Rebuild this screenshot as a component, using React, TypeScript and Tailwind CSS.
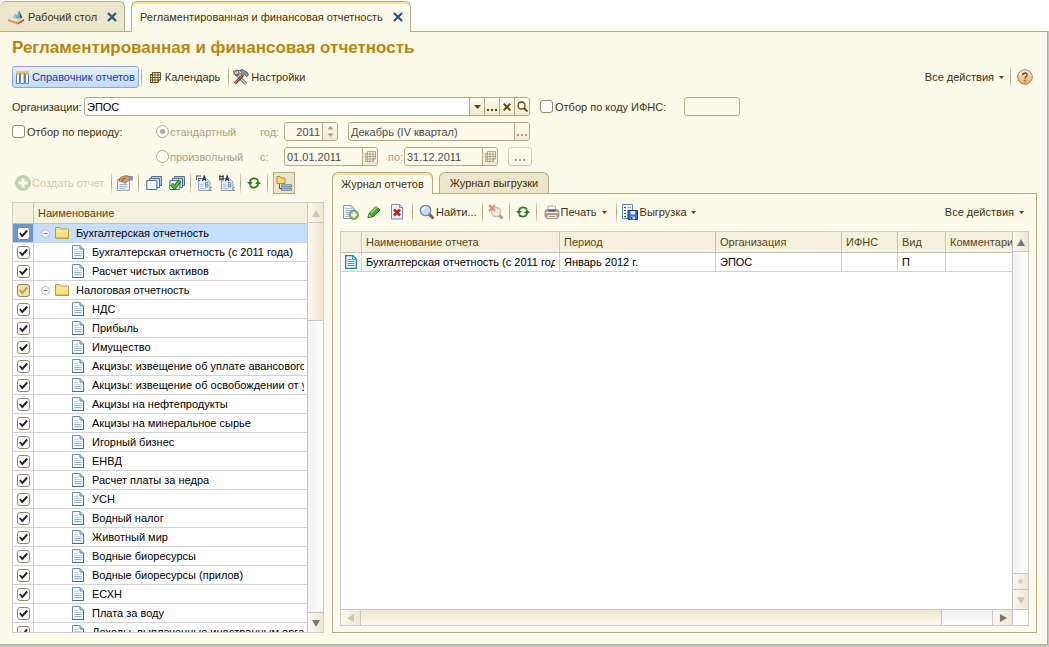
import type { ReactNode } from "react";

const treeRows = [
  { name: "Бухгалтерская отчетность", group: true, selected: true },
  { name: "Бухгалтерская отчетность (с 2011 года)" },
  { name: "Расчет чистых активов" },
  { name: "Налоговая отчетность", group: true, partial: true },
  { name: "НДС" },
  { name: "Прибыль" },
  { name: "Имущество" },
  { name: "Акцизы: извещение об уплате авансового платежа" },
  { name: "Акцизы: извещение об освобождении от уплаты" },
  { name: "Акцизы на нефтепродукты" },
  { name: "Акцизы на минеральное сырье" },
  { name: "Игорный бизнес" },
  { name: "ЕНВД" },
  { name: "Расчет платы за недра" },
  { name: "УСН" },
  { name: "Водный налог" },
  { name: "Животный мир" },
  { name: "Водные биоресурсы" },
  { name: "Водные биоресурсы (прилов)" },
  { name: "ЕСХН" },
  { name: "Плата за воду" },
  { name: "Доходы, выплаченные иностранным организациям" },
];

/* ---------- icons ---------- */

function Svg({ children, className = "" }: { children: ReactNode; className?: string }) {
  return (
    <svg viewBox="0 0 16 16" className={`size-4 shrink-0 ${className}`} fill="none" aria-hidden="true">
      {children}
    </svg>
  );
}

function DesktopIcon() {
  return (
    <Svg>
      <path d="M0 10 5.500 7.500 16 10l-6 3.500z" fill="#f6cfa4" />
      <path d="M0 10l10 3.500v2L0 12z" fill="#d89468" />
      <path d="M10 13.500 16 10v2l-6 3.500z" fill="#a9603c" />
      <path d="M2 10 6 8.300l6 1.700-3 2z" fill="#fff7ea" />
      <path d="M4.500 9.500 7 4.500l2 5.500z" fill="#9cc6df" />
      <path d="M7 4.500 10.500 9 9 10z" fill="#5590b5" />
      <path d="M8.500 8.500 11 1.500l1 8z" fill="#6ea8cc" />
      <path d="M11 1.500 14.500 8.500 12 9.500z" fill="#235c86" />
      <path d="M9.500 9h2.500v2H9.500z" fill="#ecc648" />
    </Svg>
  );
}

function CloseIcon() {
  return (
    <svg viewBox="0 0 10 10" className="size-[10px]" aria-hidden="true">
      <path d="M1 1l8 8M9 1 1 9" stroke="#23587c" strokeWidth="2.2" />
    </svg>
  );
}

function ColumnsIcon() {
  return (
    <svg viewBox="0 0 13 13" className="size-[13px] shrink-0" fill="none" aria-hidden="true">
      <path d="M.5 1.500h3v11h-3zM4.500 1.500h4v11h-4zM9.500 1.500h3v11h-3z" fill="#fff" stroke="#6688b0" />
      <path d="M0 0h4v3H0zM4.500 0h4v3h-4zM9 0h4v3H9z" fill="#f2c84c" />
      <path d="M0 3h13" stroke="#a98a3c" strokeWidth=".7" />
      <path d="M3.500 4v8M8 4v8M12.500 4v8" stroke="#4d79aa" strokeWidth=".8" />
    </svg>
  );
}

function CalendarGrid({ className = "" }: { className?: string }) {
  return (
    <svg viewBox="0 0 11 11" className={`size-[11px] shrink-0 ${className}`} fill="none" aria-hidden="true">
      <path
        d="M2.500.5h8v7.500h-2v2.500h-8v-8h2zM2.500.5v10M5 .5v10M8 .5v10M.5 3h10M.5 5.500h10M.5 8h9"
        stroke="currentColor"
        strokeWidth=".9"
      />
    </svg>
  );
}

function ToolsIcon() {
  return (
    <Svg>
      <path d="M3 5l10 10" stroke="#555c66" strokeWidth="3" />
      <path d="M3 5l10 10" stroke="#d5dbe2" strokeWidth="1.200" />
      <path d="M1 1.500v3L3.500 6.500 6 5 5.500 2 3.500 1M3 1v2.500" stroke="#555c66" strokeWidth="1.300" />
      <path d="M2 14.500 10 6" stroke="#7e3f22" strokeWidth="2.800" />
      <path d="M2 14 9.500 6" stroke="#d18a58" />
      <path d="M6.500 1.500 9 .5l5 2.500 1.500 3-2 1.500-2-2-2 1.500-2-2L9 3z" fill="#8d949c" stroke="#474b52" strokeWidth=".8" />
    </Svg>
  );
}

function HelpIcon() {
  return (
    <svg viewBox="0 0 16 16" className="size-4 shrink-0" aria-hidden="true">
      <defs>
        <linearGradient id="help" x2="0" y2="1">
          <stop stopColor="#fdf1e0" />
          <stop offset="1" stopColor="#f3a650" />
        </linearGradient>
      </defs>
      <circle cx="8" cy="8" r="7.300" fill="url(#help)" stroke="#8f8276" />
      <path d="M5.800 6.200c0-3 4.600-2.800 4.400-.2C10.100 7.500 8 7.600 8 9.500" fill="none" stroke="#6b4528" strokeWidth="1.300" />
      <path d="M7.300 10.700h1.400v1.500H7.300z" fill="#6b4528" />
    </svg>
  );
}

function Caret() {
  return (
    <svg viewBox="0 0 5 3" className="h-[3px] w-[5px] shrink-0" aria-hidden="true">
      <path d="M0 0h5L2.500 3z" fill="#5a4606" />
    </svg>
  );
}

function DropGlyph() {
  return (
    <svg viewBox="0 0 7 4" className="h-1 w-[7px] shrink-0" aria-hidden="true">
      <path d="M0 0h7L3.500 4z" fill="#5a4606" />
    </svg>
  );
}

function SearchGlyph() {
  return (
    <svg viewBox="0 0 11 11" className="size-[11px]" fill="none" aria-hidden="true">
      <circle cx="4.500" cy="4.500" r="3.500" stroke="#5a4606" strokeWidth="1.300" />
      <path d="m7 7 3.500 3.500" stroke="#5a4606" strokeWidth="1.800" />
    </svg>
  );
}

function CrossGlyph() {
  return (
    <svg viewBox="0 0 8 8" className="size-2" aria-hidden="true">
      <path d="m.7.7 6.600 6.600M7.300.7.7 7.300" stroke="#5a4606" strokeWidth="1.900" />
    </svg>
  );
}

function DotsGlyph() {
  return (
    <svg viewBox="0 0 10 2" className="mt-[7px] h-[2px] w-[10px]" aria-hidden="true">
      <path d="M0 0h2v2H0zM4 0h2v2H4zM8 0h2v2H8z" fill="currentColor" />
    </svg>
  );
}

function PlusIcon() {
  return (
    <Svg className="opacity-50">
      <circle cx="8" cy="8" r="7.300" fill="#7cb568" stroke="#7c8f72" />
      <path d="M8 3.500v9M3.500 8h9" stroke="#fff" strokeWidth="3" />
    </Svg>
  );
}

function PropertiesIcon() {
  return (
    <Svg>
      <path d="M.5 4.500h12v11H.5z" fill="#f3f8fd" stroke="#87a4c0" />
      <path d="M2.500 9.500h8M2.500 11.500h8M2.500 13.500h6" stroke="#8fb2d6" />
      <path d="M2 4 5.500 1.500 9.500.700l3.500 1v3.500l-3 .8-2 2.500L6.500 7 2.500 6.500z" fill="#d99a6c" stroke="#8d5030" strokeWidth=".8" />
      <path d="M12.500 1H16v4.500h-3.500z" fill="#7c9ab8" />
      <path d="M4 5h3M5.500 3.500h3" stroke="#8d5030" strokeWidth=".8" />
    </Svg>
  );
}

function StackIcon({ check = false }: { check?: boolean }) {
  return (
    <Svg>
      <path d="M5.500 1.500h10v9h-10z" fill="#b9d2ea" stroke="#4f6f8f" />
      <path d="M3.500 3.500h10v9h-10z" fill="#d6e6f5" stroke="#4f6f8f" />
      <path d="M.8 5.500h10v9H.8z" fill="#f2f8fe" stroke="#4f6f8f" />
      {check && (
        <>
          <path d="m2.500 9 3 3.500 5.500-7" stroke="#1d6e18" strokeWidth="3.800" />
          <path d="m2.500 9 3 3.500 5.500-7" stroke="#55c83c" strokeWidth="2" />
        </>
      )}
    </Svg>
  );
}

function MarksIcon({ filled = false }: { filled?: boolean }) {
  return (
    <Svg>
      <path d="M2.500 3.500h8l3.500 3.500v8.500H2.500z" fill="#dfe9f4" stroke="#8aa2ba" />
      {filled ? (
        <path d="M0 1.500h5M0 4h5M1 0v5.500M4 0v5.500" stroke="#3a3a3a" strokeWidth="1.100" />
      ) : (
        <path d="M0 1h5M.5 1v4M2 3.500h3M2 5.500h2" stroke="#555" />
      )}
      <path d="m6.500 6 1.700-5 1.700 5M7 4.300h2.400" stroke="#153c68" strokeWidth="1.200" />
      <path d="M9.500 7.500v4.500h2.200V7.500zM9.500 9.700h2" stroke="#6d8299" strokeWidth=".9" />
      <path d="M16 12.500h-2v3h2" stroke="#8d959e" />
      <path d="M4 9.500h3M4 11.500h3M4 13.500h5" stroke="#b3c5d8" />
    </Svg>
  );
}

function RefreshIcon() {
  return (
    <Svg>
      <path d="M4 7c.5-4.500 6.500-4.500 8-1.500" stroke="#2f7a22" strokeWidth="1.800" />
      <path d="M1 7h6L4 10.500z" fill="#2f7a22" />
      <path d="M12 9c-.5 4.500-6.500 4.500-8 1.500" stroke="#2f7a22" strokeWidth="1.800" />
      <path d="M9 9h6l-3-3.500z" fill="#2f7a22" />
    </Svg>
  );
}

function HierarchyIcon() {
  return (
    <Svg>
      <path d="M1 1.500h3l1 1.500h4v5.500H1z" fill="#f8da72" stroke="#b88b24" />
      <path d="M3.500 9v4.500H6" stroke="#5a5a50" />
      <path d="M5.500 9.800h10v2h-10zM5.500 13.300h10v2h-10z" fill="#b9d5ee" stroke="#3e6c98" strokeWidth=".8" />
    </Svg>
  );
}

function FolderIcon() {
  return (
    <svg viewBox="0 0 14 12" className="h-3 w-[14px] shrink-0" fill="none" aria-hidden="true">
      <path d="M.5 11.500v-11h4.500l1.200 1.500h7.300v9.500z" fill="#f9e084" stroke="#c39a3c" />
      <path d="M1.500 4h11.500" stroke="#fff3bd" />
      <path d="M1.500 10.500h11.500" stroke="#e8bb50" />
    </svg>
  );
}

function SheetIcon() {
  return (
    <svg viewBox="0 0 12 14" className="h-[14px] w-3 shrink-0" fill="none" aria-hidden="true">
      <path d="M.5.5h7.500l3.500 3.500v9.500H.5z" fill="#f1f8fe" stroke="#6e8ea9" />
      <path d="M8 .5v3.500h3.500" fill="#a9c3d8" stroke="#6e8ea9" />
      <path d="M2.500 4.500h4M2.500 6.500h7" stroke="#c0d3e4" />
      <path d="M2.500 8.500h7M2.500 10.500h7" stroke="#8fb1cf" />
      <path d="M0 13.500h12M11.500 4v10" stroke="#4c6d89" />
    </svg>
  );
}

function ReportIcon() {
  return (
    <svg viewBox="0 0 12 14" className="h-[14px] w-3" fill="none" aria-hidden="true">
      <path d="M.7.7h7.300l3.300 3.300v9.300H.7z" fill="#e9fbff" stroke="#1689b5" strokeWidth="1.300" />
      <path d="M7.500 1v3.500H11M2.500 4.500h4M2.500 6.500h7M2.500 8.500h7M2.500 10.500h7" stroke="#12b0dc" />
    </svg>
  );
}

function AddDocIcon() {
  return (
    <Svg>
      <path d="M.5 1.500h7.500l3.500 3.500v9.500H.5z" fill="#eef5fc" stroke="#7f9ab4" />
      <path d="M8 1.500V5h3.500M2.500 4.500h4M2.500 6.500h6M2.500 8.500h4M2.500 10.500h3M2.500 12.500h3" stroke="#9fb8d0" />
      <circle cx="10.800" cy="10.800" r="4.600" fill="#8fbb7c" stroke="#6d8a62" />
      <path d="M10.800 8v5.600M8 10.800h5.600" stroke="#fff" strokeWidth="2" />
    </Svg>
  );
}

function PencilIcon() {
  return (
    <Svg>
      <path d="M2 13.500 3.500 9 10 2.500l4 3.500-6.500 6.500z" fill="#3fae2a" stroke="#1f6a18" />
      <path d="m5 9 6-6" stroke="#9be276" strokeWidth="1.500" />
      <path d="M2 13.500 3.200 9.800 5.800 12.500z" fill="#e2edc0" stroke="#1f6a18" strokeWidth=".6" />
    </Svg>
  );
}

function DeleteDocIcon() {
  return (
    <Svg>
      <path d="M2.500.5h8l3 3v11.500h-11z" fill="#eaf3fb" stroke="#6d93b8" />
      <path d="M10.500.5v3h3" stroke="#6d93b8" />
      <path d="m5 5.500 6 6M11 5.500l-6 6" stroke="#c61f16" strokeWidth="2.600" />
    </Svg>
  );
}

function MagnifierIcon({ cancel = false }: { cancel?: boolean }) {
  return (
    <Svg className={cancel ? "opacity-60" : ""}>
      <path d="m10 10 4.500 4.500" stroke="#8a5a40" strokeWidth="3" />
      <circle
        cx={cancel ? 8 : 6.5}
        cy={cancel ? 8 : 6.5}
        r={cancel ? 4.5 : 5.2}
        fill={cancel ? "#e4e4e6" : "#c3ddf6"}
        stroke={cancel ? "#a7a3a3" : "#74849c"}
        strokeWidth="1.300"
      />
      {cancel ? (
        <path d="m1 1 6 6M7 1 1 7" stroke="#d0402c" strokeWidth="2.200" />
      ) : (
        <path d="M3.500 6.500c0-2 1.500-3 3-3" stroke="#fff" strokeWidth="1.500" />
      )}
    </Svg>
  );
}

function PrinterIcon() {
  return (
    <Svg>
      <path d="M4 2h7.500v5H4z" fill="#fff" stroke="#a2a5ab" strokeWidth=".8" />
      <path d="M1.500 6.500 3.500 5.500h9l2 1 .5 1.500v4.500H1V8z" fill="#a9abb1" stroke="#7a7d84" strokeWidth=".8" />
      <path d="M4.500 6h7v1.200h-7z" fill="#4b4d52" />
      <path d="M1.500 8.500h13" stroke="#eceded" />
      <path d="M3.500 10.500h9l1 4h-11z" fill="#f8e6d6" stroke="#98857a" strokeWidth=".8" />
      <path d="M4.500 12.500h7" stroke="#dd8a60" />
    </Svg>
  );
}

function ExportIcon() {
  return (
    <Svg>
      <path d="M.5.5h10v14H.5z" fill="#f4f9fe" stroke="#5e88b4" />
      <path d="M2 3.500h2M2 6.500h2M2 9.500h2M2 12.500h2" stroke="#2a4e7c" />
      <path d="M5 3.500h4M5 6.500h2" stroke="#98b4d0" />
      <path d="M6 6.500h9.500v9H6z" fill="#2f78bf" stroke="#173f78" />
      <path d="M8.500 7h4.500v3.500H8.500z" fill="#e4f0fb" />
      <path d="M8.500 12.500H13v3H8.500z" fill="#bcd0e6" />
      <path d="M9 13h1.500v2.500H9z" fill="#173f78" />
    </Svg>
  );
}

/* ---------- controls ---------- */

function Separator() {
  return <div className="h-5 w-px shrink-0 bg-gradient-to-b from-[#e8e3c8] via-[#a89f78] to-[#e8e3c8]" />;
}

function Check({
  id,
  label,
  checked = false,
  partial = false,
}: {
  id?: string;
  label?: string;
  checked?: boolean;
  partial?: boolean;
}) {
  return (
    <span className="relative grid size-[13px] shrink-0 place-items-center">
      <input
        id={id}
        aria-label={label}
        type="checkbox"
        defaultChecked={checked}
        className={`peer col-start-1 row-start-1 size-[13px] appearance-none rounded-[3px] border border-[#948a5c] ${
          partial ? "bg-[#ede0a6]" : "bg-white"
        }`}
      />
      <svg
        viewBox="0 0 9 9"
        className={`pointer-events-none col-start-1 row-start-1 hidden size-[9px] peer-checked:block ${
          partial ? "text-[#b3a25e]" : "text-[#222]"
        }`}
        fill="none"
        aria-hidden="true"
      >
        <path d="m.8 4 2.500 3L8.200 1.500" stroke="currentColor" strokeWidth="1.900" />
      </svg>
    </span>
  );
}

function Radio({ id, label, checked = false }: { id: string; label: string; checked?: boolean }) {
  return (
    <div className="flex w-[104px] shrink-0 items-center gap-px">
      <span className="grid size-[13px] shrink-0 place-items-center">
        <input
          id={id}
          type="radio"
          name="period"
          disabled
          defaultChecked={checked}
          className="peer col-start-1 row-start-1 size-[13px] appearance-none rounded-full border border-[#b5ab82] bg-white/50"
        />
        <span className="col-start-1 row-start-1 hidden size-[5px] rounded-full bg-[#aaa9a0] peer-checked:block" />
      </span>
      <label htmlFor={id} className="text-[#aaa07e]">{label}</label>
    </div>
  );
}

function Field({
  id,
  label,
  value,
  width,
  children,
  muted = false,
  right = false,
}: {
  id: string;
  label?: string;
  value: string;
  width: string;
  children?: ReactNode;
  muted?: boolean;
  right?: boolean;
}) {
  return (
    <div
      className={`flex h-[19px] shrink-0 overflow-hidden rounded-[3px] border border-[#b5ab82] ${
        muted ? "bg-[#fcfaeb]" : "bg-white"
      } ${width}`}
    >
      <input
        id={id}
        aria-label={label}
        type="text"
        defaultValue={value}
        disabled={muted}
        className={`min-w-0 flex-1 bg-transparent px-0.5 outline-none ${muted ? "text-[#4d4d4d]" : "text-black"} ${
          right ? "text-right" : ""
        }`}
      />
      {children}
    </div>
  );
}

function FieldButton({ label, children, muted = false }: { label: string; children: ReactNode; muted?: boolean }) {
  return (
    <button
      type="button"
      aria-label={label}
      disabled={muted}
      className={`grid w-[15px] shrink-0 place-items-center border-l border-[#b5ab82] bg-gradient-to-b from-[#fdfcf2] to-[#efe9d0] ${
        muted ? "text-[#aaa07e]" : "text-[#5a4606]"
      }`}
    >
      {children}
    </button>
  );
}

function ToolButton({ label, children }: { label: string; children: ReactNode }) {
  return (
    <button type="button" aria-label={label} title={label} className="shrink-0">
      {children}
    </button>
  );
}

function ScrollArrow({ dir, active = false }: { dir: "up" | "down" | "left" | "right"; active?: boolean }) {
  const paths = { up: "M4 1 8 8H0z", down: "M0 1h8L4 8z", left: "M0 4l7-4v8z", right: "M8 4 1 0v8z" };
  return (
    <button
      type="button"
      aria-label={dir}
      className={`grid shrink-0 place-items-center border-[#c6c6c6] bg-gradient-to-r from-[#fbf8ee] to-[#efe7ce] ${
        dir === "up" ? "h-5 w-full border-b" : ""
      } ${dir === "down" ? "h-5 w-full border-t" : ""} ${dir === "left" ? "h-full w-5 border-r" : ""} ${
        dir === "right" ? "h-full w-5 border-l" : ""
      }`}
    >
      <svg viewBox="0 0 8 8" className="size-2" aria-hidden="true">
        <path d={paths[dir]} fill={active ? "#77757a" : "#c9c5b8"} />
      </svg>
    </button>
  );
}

/* ---------- page parts ---------- */

function WindowTabs() {
  return (
    <div className="flex h-[31px] shrink-0 items-end gap-1.5 pt-px">
      <div className="flex h-full w-[125px] items-center rounded-t-md border border-b-0 border-l-0 border-[#b5ab82] bg-[#ece6cb] pr-[7px] pl-2">
        <DesktopIcon />
        <span className="flex-1 pl-1">Рабочий стол</span>
        <button type="button" aria-label="Закрыть Рабочий стол">
          <CloseIcon />
        </button>
      </div>
      <div className="relative -mb-px flex h-[31px] w-[280px] items-center rounded-t-md border border-b-0 border-[#b5ab82] bg-[#fcfaeb] pr-[7px] pl-2 shadow-[inset_0_2px_0_#fbdf9c]">
        <span className="flex-1 whitespace-nowrap">Регламентированная и финансовая отчетность</span>
        <button type="button" aria-label="Закрыть отчетность">
          <CloseIcon />
        </button>
      </div>
    </div>
  );
}

function MainToolbar() {
  return (
    <div className="mt-2 flex h-[22px] items-center">
      <button
        type="button"
        className="flex h-[22px] items-center gap-[3px] rounded-[3px] border border-[#86a9e4] bg-gradient-to-b from-[#e6f0ff] to-[#c2dafc] px-[3px] text-[#1b3c9e]"
      >
        <ColumnsIcon />
        Справочник отчетов
      </button>
      <div className="flex items-center pl-0.5">
        <Separator />
        <button type="button" className="flex items-center gap-1 px-2">
          <CalendarGrid className="text-[#5a4606]" />
          Календарь
        </button>
        <Separator />
        <button type="button" className="flex items-center gap-0.5 pl-1">
          <ToolsIcon />
          Настройки
        </button>
      </div>
      <div className="ml-auto flex items-center gap-1.5 pr-1">
        <button type="button" className="flex items-center gap-[5px]">
          Все действия
          <Caret />
        </button>
        <Separator />
        <ToolButton label="Справка">
          <HelpIcon />
        </ToolButton>
      </div>
    </div>
  );
}

function Filters() {
  return (
    <div className="mt-[9px] flex flex-col gap-1.5">
      <div className="flex h-[19px] items-center">
        <label htmlFor="org" className="w-[72px] shrink-0 whitespace-nowrap">Организации:</label>
        <Field id="org" value="ЭПОС" width="w-[446px]">
          <FieldButton label="Выбрать из списка">
            <DropGlyph />
          </FieldButton>
          <FieldButton label="Выбрать организацию">
            <DotsGlyph />
          </FieldButton>
          <FieldButton label="Очистить">
            <CrossGlyph />
          </FieldButton>
          <FieldButton label="Открыть">
            <SearchGlyph />
          </FieldButton>
        </Field>
        <div className="flex w-[144px] shrink-0 items-center gap-0.5 pl-2.5">
          <Check id="ifns-filter" />
          <label htmlFor="ifns-filter" className="whitespace-nowrap">Отбор по коду ИФНС:</label>
        </div>
        <div className="pl-2.5">
          <Field id="ifns" label="Код ИФНС" value="" width="w-14" muted />
        </div>
      </div>

      <div className="flex h-[19px] items-center">
        <div className="flex w-36 shrink-0 items-center gap-0.5">
          <Check id="period-filter" />
          <label htmlFor="period-filter">Отбор по периоду:</label>
        </div>
        <Radio id="standard" label="стандартный" checked />
        <label htmlFor="year" className="w-6 shrink-0 text-[#aaa07e]">год:</label>
        <Field id="year" value="2011" width="w-[54px]" muted right>
          <FieldButton label="Изменить год" muted>
            <svg viewBox="0 0 7 11" className="h-[11px] w-[7px]" aria-hidden="true">
              <path d="M3.500 0 6.500 3.500h-6zM3.500 11l3-3.500h-6z" fill="currentColor" />
            </svg>
          </FieldButton>
        </Field>
        <div className="pl-2.5">
          <Field id="month" label="Период" value="Декабрь (IV квартал)" width="w-[182px]" muted>
            <FieldButton label="Выбрать период" muted>
              <DotsGlyph />
            </FieldButton>
          </Field>
        </div>
      </div>

      <div className="flex h-[19px] items-center pl-36">
        <Radio id="custom" label="произвольный" />
        <label htmlFor="from" className="w-6 shrink-0 text-[#aaa07e]">с:</label>
        <Field id="from" value="01.01.2011" width="w-[94px]" muted>
          <FieldButton label="Календарь" muted>
            <CalendarGrid />
          </FieldButton>
        </Field>
        <label htmlFor="to" className="w-[26px] shrink-0 pl-2.5 text-[#aaa07e]">по:</label>
        <Field id="to" value="31.12.2011" width="w-[94px]" muted>
          <FieldButton label="Календарь" muted>
            <CalendarGrid />
          </FieldButton>
        </Field>
        <button
          type="button"
          disabled
          aria-label="Выбрать интервал"
          className="ml-2.5 grid h-[19px] w-6 place-items-center rounded-[3px] border border-[#d5cfae] text-[#aaa07e]"
        >
          <DotsGlyph />
        </button>
      </div>
    </div>
  );
}

function ReportTree() {
  return (
    <div className="flex min-h-0 w-[312px] shrink-0 flex-col">
      <div className="flex h-[22px] shrink-0 items-center gap-[5px] pl-[3px]">
        <button type="button" disabled className="flex items-center gap-px pr-0.5 text-[#d0cbb0]">
          <PlusIcon />
          Создать отчет
        </button>
        <Separator />
        <ToolButton label="Свойства"><PropertiesIcon /></ToolButton>
        <Separator />
        <div className="flex gap-[7px] pl-0.5">
          <ToolButton label="Снять все"><StackIcon /></ToolButton>
          <ToolButton label="Отметить все"><StackIcon check /></ToolButton>
        </div>
        <Separator />
        <div className="flex gap-[7px]">
          <ToolButton label="По возрастанию"><MarksIcon /></ToolButton>
          <ToolButton label="По убыванию"><MarksIcon filled /></ToolButton>
        </div>
        <Separator />
        <ToolButton label="Обновить"><RefreshIcon /></ToolButton>
        <Separator />
        <button
          type="button"
          aria-label="Иерархия"
          className="grid size-[22px] place-items-center border border-[#b5ab82] bg-[#ebe4c9]"
        >
          <HierarchyIcon />
        </button>
      </div>

      <div className="mt-2 flex min-h-0 flex-1 border border-[#cdcdcd] bg-white">
        <div className="min-w-0 flex-1 overflow-hidden">
          <table className="w-full table-fixed border-separate border-spacing-0 text-black">
            <thead>
              <tr className="h-[21px] bg-[#f5f1df] text-left text-[#594508]">
                <th className="w-[21px] border-r border-b border-[#c8c2a0]" aria-label="Отметка" />
                <th className="border-b border-[#c8c2a0] pl-1 font-normal">Наименование</th>
              </tr>
            </thead>
            <tbody>
              {treeRows.map((row) => (
                <tr key={row.name} className={`h-[19px] ${row.selected ? "bg-[#c6dfff]" : ""}`}>
                  <td className={`border-r border-b border-[#cdd2d6] p-0 ${row.selected ? "bg-[#6b96cf]" : ""}`}>
                    <div className="grid h-[18px] place-items-center">
                      <Check label={row.name} checked partial={row.partial} />
                    </div>
                  </td>
                  <td className="border-b border-[#cdd2d6] py-0 pr-[3px] pl-[7px]">
                    <div className="flex h-[18px] items-center overflow-hidden whitespace-nowrap">
                      {row.group ? (
                        <>
                          <svg viewBox="0 0 9 9" className="size-[9px] shrink-0" fill="none" aria-hidden="true">
                            <circle cx="4.500" cy="4.500" r="4" fill="#f7f9fc" stroke="#b3bac4" />
                            <path d="M2.500 4.500h4" stroke="#7e8794" />
                          </svg>
                          <span className="px-[5px]"><FolderIcon /></span>
                          <span className="pl-0.5">{row.name}</span>
                        </>
                      ) : (
                        <>
                          <span className="shrink-0 pr-2 pl-[31px]"><SheetIcon /></span>
                          <span className="overflow-hidden">{row.name}</span>
                        </>
                      )}
                    </div>
                  </td>
                </tr>
              ))}
            </tbody>
          </table>
        </div>
        <div className="flex w-4 shrink-0 flex-col border-l border-[#c6c6c6] bg-gradient-to-r from-[#f2f2f2] to-white">
          <ScrollArrow dir="up" />
          <div className="h-[98px] border-b border-[#c6c6c6] bg-gradient-to-r from-[#fbf8ee] to-[#efe7ce]" />
          <div className="flex-1" />
          <ScrollArrow dir="down" active />
        </div>
      </div>
    </div>
  );
}

function JournalToolbar() {
  return (
    <div className="flex h-[22px] shrink-0 items-center gap-[5px] pl-[3px]">
      <div className="flex gap-[7px] pr-0.5">
        <ToolButton label="Добавить"><AddDocIcon /></ToolButton>
        <ToolButton label="Изменить"><PencilIcon /></ToolButton>
        <ToolButton label="Пометить на удаление"><DeleteDocIcon /></ToolButton>
      </div>
      <Separator />
      <button type="button" className="flex items-center gap-px pl-px">
        <MagnifierIcon />
        Найти...
      </button>
      <Separator />
      <ToolButton label="Отменить поиск"><MagnifierIcon cancel /></ToolButton>
      <Separator />
      <ToolButton label="Обновить"><RefreshIcon /></ToolButton>
      <Separator />
      <button type="button" className="flex items-center gap-px pl-0.5">
        <PrinterIcon />
        Печать
        <span className="px-1"><Caret /></span>
      </button>
      <Separator />
      <button type="button" className="flex items-center gap-0.5">
        <ExportIcon />
        Выгрузка
        <span className="pl-0.5"><Caret /></span>
      </button>
      <button type="button" className="ml-auto flex items-center gap-[5px] pr-[5px]">
        Все действия
        <Caret />
      </button>
    </div>
  );
}

function JournalTable() {
  const head = "overflow-hidden border-r border-b border-[#c8c2a0] px-1 py-0 font-normal whitespace-nowrap";
  const cell = "overflow-hidden border-r border-b border-[#cdd2d6] px-1 py-0 whitespace-nowrap";
  return (
    <div className="mt-2 flex min-h-0 flex-1 flex-col border border-[#cdcdcd] bg-white">
      <div className="flex min-h-0 flex-1">
        <div className="min-w-0 flex-1 overflow-hidden">
          <table className="w-full table-fixed border-separate border-spacing-0 text-left text-black">
            <thead>
              <tr className="h-[21px] bg-[#f5f1df] text-[#594508]">
                <th className={`w-[21px] ${head}`} aria-label="Вид записи" />
                <th className={`w-[198px] ${head}`}>Наименование отчета</th>
                <th className={`w-[156px] ${head}`}>Период</th>
                <th className={`w-[126px] ${head}`}>Организация</th>
                <th className={`w-14 ${head}`}>ИФНС</th>
                <th className={`w-12 ${head}`}>Вид</th>
                <th className="overflow-hidden border-b border-[#c8c2a0] py-0 pr-0 pl-1 font-normal whitespace-nowrap">
                  Комментарий
                </th>
              </tr>
            </thead>
            <tbody>
              <tr className="h-[19px]">
                <td className={cell}>
                  <div className="grid place-items-center"><ReportIcon /></div>
                </td>
                <td className={cell}>
                  <div className="overflow-hidden">Бухгалтерская отчетность (с 2011 года)</div>
                </td>
                <td className={cell}>Январь 2012 г.</td>
                <td className={cell}>ЭПОС</td>
                <td className={cell} />
                <td className={cell}>П</td>
                <td className="border-b border-[#cdd2d6]" />
              </tr>
            </tbody>
          </table>
        </div>
        <div className="flex w-4 shrink-0 flex-col border-l border-[#c6c6c6] bg-gradient-to-r from-[#f2f2f2] to-white">
          <ScrollArrow dir="up" active />
          <div className="flex-1" />
          <div className="grid h-4 place-items-center border-t border-[#c6c6c6] bg-gradient-to-r from-[#fbf8ee] to-[#efe7ce]">
            <span className="size-[5px] rounded-full bg-[#d6d0b8]" />
          </div>
          <ScrollArrow dir="down" />
        </div>
      </div>
      <div className="flex h-4 shrink-0 border-t border-[#c6c6c6]">
        <ScrollArrow dir="left" />
        <div className="flex flex-1 bg-gradient-to-b from-[#f0f0f0] to-white">
          <div className="w-[92%] border-r border-[#c6c6c6] bg-gradient-to-b from-[#efe7ce] to-[#fbf8ee]" />
        </div>
        <ScrollArrow dir="right" active />
        <div className="w-4 shrink-0 border-l border-[#c6c6c6]" />
      </div>
    </div>
  );
}

function Journal() {
  return (
    <div className="flex min-h-0 min-w-0 flex-1 flex-col">
      <div role="tablist" className="flex h-[21px] shrink-0 items-end gap-1.5">
        <button
          type="button"
          role="tab"
          aria-selected="true"
          className="relative -mb-px h-[22px] w-[101px] rounded-t-md border border-b-0 border-[#b5ab82] bg-[#fcfaeb] shadow-[inset_0_2px_0_#fbdf9c]"
        >
          Журнал отчетов
        </button>
        <button
          type="button"
          role="tab"
          aria-selected="false"
          className="h-[21px] w-[110px] rounded-t-md border border-b-0 border-[#b5ab82] bg-[#ece6cb]"
        >
          Журнал выгрузки
        </button>
      </div>
      <div className="flex min-h-0 flex-1 flex-col border border-[#b5ab82] px-[7px] pt-[7px] pb-1.5">
        <JournalToolbar />
        <JournalTable />
      </div>
    </div>
  );
}

export default function App() {
  return (
    <div className="flex h-screen flex-col overflow-hidden bg-white font-['Liberation_Sans',Arial,sans-serif] text-[11px] leading-[14px] text-[#3f300a]">
      <WindowTabs />
      <div className="flex min-h-0 flex-1 border-r border-b-2 border-[#c4c4c4]">
        <main className="flex min-w-0 flex-1 flex-col border-t border-r border-b border-[#b5ab82] bg-[#fcfaeb] pt-1.5 pr-2.5 pb-[11px] pl-3">
          <h1 className="text-[17px] leading-5 font-bold whitespace-nowrap text-[#b8860b]">
            Регламентированная и финансовая отчетность
          </h1>
          <MainToolbar />
          <Filters />
          <div className="mt-1.5 flex min-h-0 flex-1 gap-2">
            <ReportTree />
            <Journal />
          </div>
        </main>
      </div>
    </div>
  );
}
